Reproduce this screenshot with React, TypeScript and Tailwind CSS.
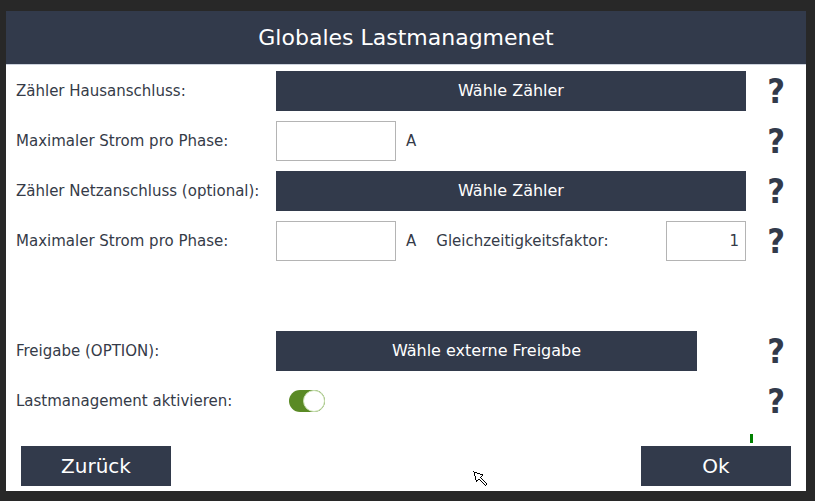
const font = { fontFamily: '"DejaVu Sans", "Liberation Sans", sans-serif' };
const helpFont = { fontFamily: '"DejaVu Sans Condensed", "DejaVu Sans", sans-serif' };

const Help = () => (
  <div
    className="w-[60px] flex justify-center items-center text-[34px] font-bold leading-none text-[#323a4b]"
    style={helpFont}
  >
    ?
  </div>
);

const Label = ({ text }: { text: string }) => (
  <div className="w-[270px] pl-[10px] text-[15px] text-[#353b48]">{text}</div>
);

const SelectButton = ({ text, width }: { text: string; width: string }) => (
  <button
    type="button"
    className={`${width} h-[40px] bg-[#323a4b] text-white text-[16px] flex items-center justify-center`}
  >
    {text}
  </button>
);

const Row = ({ children, className = '' }: { children: React.ReactNode; className?: string }) => (
  <div className={`flex h-[40px] items-center ${className}`}>{children}</div>
);

const App = () => {
  return (
    <div className="w-[815px] h-[501px] bg-[#282828] pl-[6px] pt-[11px]" style={font}>
      <div className="relative w-[800px] h-[480px] bg-white flex flex-col">
        <div className="h-[54px] bg-[#323a4b] border-b border-[#ccd2dc] flex items-center justify-center text-white text-[22px]">
          Globales Lastmanagmenet
        </div>

        <div className="flex flex-col gap-[10px] pt-[6px]">
          <Row>
            <Label text="Zähler Hausanschluss:" />
            <SelectButton text="Wähle Zähler" width="w-[470px]" />
            <Help />
          </Row>
          <Row>
            <Label text="Maximaler Strom pro Phase:" />
            <div className="w-[470px] flex items-center">
              <div className="w-[120px] h-[40px] border border-[#b4b4b4]" />
              <span className="ml-[10px] text-[15px] text-[#353b48]">A</span>
            </div>
            <Help />
          </Row>
          <Row>
            <Label text="Zähler Netzanschluss (optional):" />
            <SelectButton text="Wähle Zähler" width="w-[470px]" />
            <Help />
          </Row>
          <Row>
            <Label text="Maximaler Strom pro Phase:" />
            <div className="w-[470px] flex items-center">
              <div className="w-[120px] h-[40px] border border-[#b4b4b4]" />
              <span className="ml-[10px] text-[15px] text-[#353b48]">A</span>
              <span className="ml-[20px] text-[15px] text-[#353b48]">Gleichzeitigkeitsfaktor:</span>
              <div className="ml-auto w-[80px] h-[40px] border border-[#b4b4b4] flex items-center justify-end pr-[6px] text-[15px] text-[#353b48]">
                1
              </div>
            </div>
            <Help />
          </Row>
          <Row className="mt-[60px]">
            <Label text="Freigabe (OPTION):" />
            <div className="w-[470px]">
              <SelectButton text="Wähle externe Freigabe" width="w-[421px]" />
            </div>
            <Help />
          </Row>
          <Row>
            <Label text="Lastmanagement aktivieren:" />
            <div className="w-[470px] flex items-center">
              <div className="ml-[13px] w-[36px] h-[22px] rounded-full bg-[#5a8a25] flex items-center justify-end">
                <div className="w-[22px] h-[22px] rounded-full bg-white border border-[#c8e0b0]" />
              </div>
            </div>
            <Help />
          </Row>
        </div>

        <div className="h-[25px]">
          <div className="ml-[744px] mt-[13px] w-[3px] h-[9px] bg-[#008000]" />
        </div>

        <div className="flex justify-between px-[15px]">
          <button type="button" className="w-[150px] h-[40px] bg-[#323a4b] text-white text-[20px]">
            Zurück
          </button>
          <button type="button" className="w-[150px] h-[40px] bg-[#323a4b] text-white text-[20px]">
            Ok
          </button>
        </div>

        <svg
          className="absolute left-[467px] top-[460px]"
          width="16"
          height="16"
          viewBox="0 0 16 16"
        >
          <path
            d="M1 1 L10 4 L7.5 6.5 L14 13 L12.5 14.5 L6 8 L3.5 10.5 Z"
            fill="white"
            stroke="black"
            strokeWidth="1"
            shapeRendering="crispEdges"
          />
        </svg>
      </div>
    </div>
  );
};

export default App;
